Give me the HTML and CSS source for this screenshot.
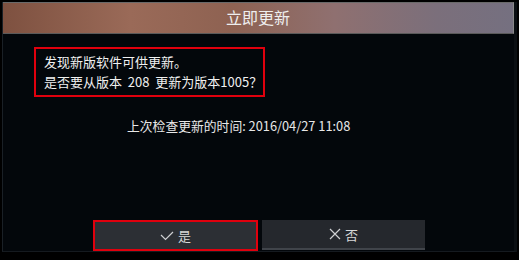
FILE: index.html
```html
<!DOCTYPE html>
<html>
<head>
<meta charset="utf-8">
<link rel="stylesheet" href="styles.css">
</head>
<body>
<div class="screen">
  <div class="header">立即更新</div>
  <div class="content">
    <div class="msg">
      <div>发现新版软件可供更新。</div>
      <div>是否要从版本 &nbsp;208&nbsp; 更新为版本1005？</div>
    </div>
    <div class="last">上次检查更新的时间: 2016/04/27 11:08</div>
    <div class="buttons">
      <div class="btn yes">
        <svg width="14" height="10" viewBox="0 0 14 10"><path d="M1 4 L5.5 8.5 L13 1" fill="none" stroke="#cfd0d2" stroke-width="1.2"/></svg>
        <span>是</span>
      </div>
      <div class="btn no">
        <svg width="12" height="12" viewBox="0 0 12 12"><path d="M1 1 L11 11 M11 1 L1 11" fill="none" stroke="#cfd0d2" stroke-width="1.2"/></svg>
        <span>否</span>
      </div>
    </div>
  </div>
</div>
</body>
</html>
```
FILE: styles.css
```css
html, body {
  margin: 0;
  padding: 0;
  background: #000;
}
body {
  width: 519px;
  height: 260px;
  overflow: hidden;
  font-family: "Noto Sans CJK SC", "Noto Sans", sans-serif;
  color: #e6e6e6;
}
.screen {
  margin: 2px 2px 0 2px;
  height: 249px;
  background: #03070b;
  border-left: 1px solid #1a2026;
  border-right: 3px solid #0b0f13;
  border-bottom: 1px solid #151a1f;
  display: flex;
  flex-direction: column;
}
.header {
  height: 30px;
  line-height: 29px;
  text-align: center;
  font-size: 16px;
  color: #eeeeee;
  background: linear-gradient(90deg, #7e5140 0%, #9a6a58 25%, #8e6252 45%, #8f7070 65%, #7b6f7b 85%, #757080 100%);
  border-top: 1px solid #6a6a6a;
  border-bottom: 1px solid #5a5a5a;
  border-right: 1px solid #888;
}
.content {
  flex: 1;
  display: flex;
  flex-direction: column;
  padding-left: 31px;
}
.msg {
  margin-top: 13px;
  width: 211px;
  height: 43px;
  border: 2px solid #e0000d;
  padding: 3px 8px 0 8px;
  font-size: 13px;
  line-height: 20px;
  color: #f0f0f0;
  white-space: nowrap;
}
.last {
  margin-top: 20px;
  padding-left: 93px;
  font-size: 12.8px;
  line-height: 18px;
  color: #e8e8e8;
}
.buttons {
  margin-top: auto;
  margin-left: 59px;
  display: flex;
  gap: 4px;
  align-items: flex-start;
}
.btn {
  background: #2c2f34;
  display: flex;
  align-items: center;
  justify-content: center;
  gap: 4px;
  font-size: 13px;
  color: #d8d8d8;
}
.btn.yes {
  width: 161px;
  height: 27px;
  border: 2px solid #e0000d;
}
.btn.no {
  width: 163px;
  height: 28px;
  border-bottom: 2px solid #40444a;
  background: #25282d;
}
```
